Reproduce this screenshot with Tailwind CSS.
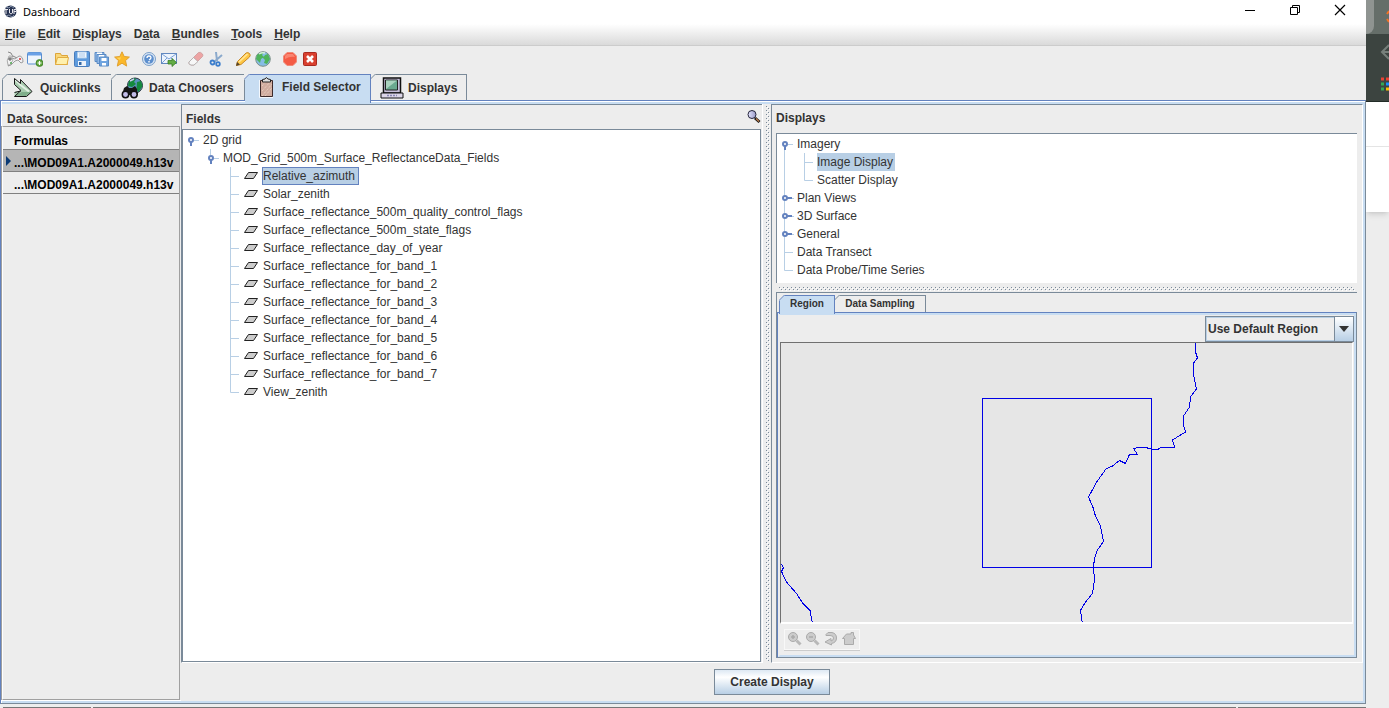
<!DOCTYPE html>
<html lang="en">
<head>
<meta charset="utf-8">
<title>Dashboard</title>
<script src="https://cdn.jsdelivr.net/npm/@tailwindcss/browser@4"></script>
</head>
<body class="h-screen overflow-hidden bg-[#ededed] font-['Liberation_Sans',Arial,sans-serif] text-xs leading-[18px] text-[#333]">

<svg class="absolute h-0 w-0" aria-hidden="true">
  <symbol id="open" viewBox="0 0 20 18"><path d="M11 9.500h5" stroke="#b8cfe5"/><circle cx="8" cy="9" r="2" fill="#fff" stroke="#6382bf" stroke-width="2"/><path d="M8 11v4" stroke="#6382bf" stroke-width="2"/></symbol>
  <symbol id="closed" viewBox="0 0 20 18"><path d="M13 9.500h4" stroke="#b8cfe5"/><circle cx="8" cy="9" r="2" fill="#fff" stroke="#6382bf" stroke-width="2"/><path d="M10 9h5" stroke="#6382bf" stroke-width="2"/></symbol>
  <symbol id="mid" viewBox="0 0 10 18"><path d="M.5 0v18M1 9.500h8" stroke="#b8cfe5"/></symbol>
  <symbol id="end" viewBox="0 0 10 18"><path d="M.5 0v9.500h8.500" fill="none" stroke="#b8cfe5"/></symbol>
  <symbol id="plane" viewBox="0 0 14 10"><path d="M4.500 1.500h9l-4 6h-9z" fill="#ccc" stroke="#222"/></symbol>
  <symbol id="corner" viewBox="0 0 6 6"><path d="M0 0h6L0 6z" fill="#ededed"/><path d="M0 5.500L5.500 0" stroke="currentColor"/></symbol>
  <pattern id="dots" width="4" height="4" patternUnits="userSpaceOnUse"><path d="M0 .5h1M2 2.500h1" stroke="#7a8a99"/><path d="M1 1.500h1M3 3.500h1" stroke="#fff"/></pattern>
  <linearGradient id="lens"><stop stop-color="#e6e6ff"/><stop offset="1" stop-color="#9a9ac8"/></linearGradient>
</svg>

<div class="flex h-full">
<div class="flex h-full min-w-0 flex-1 flex-col">

  <header class="flex h-6 shrink-0 items-center bg-white pl-1 font-['Noto_Sans',sans-serif] text-black">
    <svg class="mr-[5px] h-3.5 w-3.5" viewBox="0 0 14 14"><circle cx="6.500" cy="6.500" r="6" fill="#283452"/><path d="M2 2l3 1 2-2 3 2M2 11l3-1 3 2 2-2" fill="none" stroke="#7f8da6"/><path d="M0 4.500h4M2 4v5M5.500 4v4q1.500 2 3 0V4M10 9V4.500h2.500v2H10" fill="none" stroke="#e8e8ee"/></svg>
    <h1 class="grow text-[11px]">Dashboard</h1>
    <button aria-label="Minimize" class="flex h-5 w-[45px] items-start justify-center pt-0.5"><svg class="h-3 w-3" viewBox="0 0 12 12"><path d="M1 6.500h10" stroke="#000"/></svg></button>
    <button aria-label="Restore" class="flex h-5 w-[45px] items-start justify-center pt-0.5"><svg class="h-3 w-3" viewBox="0 0 12 12" fill="none" stroke="#000"><path d="M1.500 3.500h7v7h-7zM3.500 3V1.500h7v7H9"/></svg></button>
    <button aria-label="Close" class="mr-[3px] flex h-5 w-[46px] items-start justify-center pt-0.5"><svg class="h-3 w-3" viewBox="0 0 12 12"><path d="M1 1l10 10M11 1L1 11" stroke="#000" stroke-width="1.200"/></svg></button>
  </header>

  <nav class="flex h-[22px] shrink-0 items-center gap-3 border-b border-[#ccc] bg-linear-to-b from-white to-[#dadada] pb-0.5 pl-[5px] font-bold">
    <button><u>F</u>ile</button><button><u>E</u>dit</button><button><u>D</u>isplays</button><button>D<u>a</u>ta</button><button><u>B</u>undles</button><button><u>T</u>ools</button><button><u>H</u>elp</button>
  </nav>

  <div role="toolbar" aria-label="Main tools" class="flex h-7 shrink-0 items-center gap-[7px] pb-0.5 pl-[5px]">
    <div class="flex">
      <button aria-label="Show dashboard" class="flex w-5 justify-center"><svg class="h-4 w-[18px]" viewBox="0 0 18 16"><path d="M2 1l3 1 2 4M7 5l4 2" fill="none" stroke="#888"/><path d="M6 7l3 1 4-3q4 0 4 6l-2 1-3-3-3 1-4 4-3 1z" fill="#f0f0f4" stroke="#888" stroke-width=".8"/><path d="M3 5q-3 5-1 9l2 0 3-5-2-4z" fill="#f2f2f2" stroke="#999" stroke-width=".8"/><path d="M2 8h4M4 6v4" stroke="#5a5a5a"/><circle cx="14" cy="8" r="1" fill="#d33"/><circle cx="5" cy="12" r="1" fill="#5a5"/></svg></button>
      <button aria-label="New window" class="flex w-5 justify-center"><svg class="h-4 w-4" viewBox="0 0 16 16"><rect x=".5" y="1.500" width="14" height="11.500" rx="1" fill="#eef4fc" stroke="#5b8fd0"/><path d="M1 3h13" stroke="#6aa0e6" stroke-width="3"/><circle cx="12.500" cy="12" r="3.500" fill="#5fa63c" stroke="#35751d" stroke-width=".7"/><path d="M10.500 12h4M12.500 10v4" stroke="#fff" stroke-width="1.200"/></svg></button>
    </div>
    <div class="flex">
      <button aria-label="Open" class="flex w-5 justify-center"><svg class="h-4 w-4" viewBox="0 0 16 16"><path d="M1.500 13.500v-11h5l1 2h6v9z" fill="#f9d77a" stroke="#dda53a"/><path d="M1.500 13.500l2-7h11l-1.500 7z" fill="#fff0ad" stroke="#e2ad42"/></svg></button>
      <button aria-label="Save" class="flex w-5 justify-center"><svg class="h-4 w-4" viewBox="0 0 16 16"><rect x=".5" y=".5" width="15" height="15" rx="1" fill="#5f9bdd" stroke="#4a7dbb"/><path d="M3.500 1h9v6h-9z" fill="#f2f8ff" stroke="#afcdea"/><path d="M5 3h6M5 5h6" stroke="#a9c7e8"/><path d="M4 10h8v5H4z" fill="#eef3fa"/><path d="M5 11h2.500v3H5z" fill="#3468a5"/></svg></button>
      <button aria-label="Save as" class="flex w-5 justify-center"><svg class="h-4 w-4" viewBox="0 0 16 16" stroke="#5b8bc4"><path d="M1 1.500h9v9H1z" fill="#91b9e8"/><path d="M3 1.500h5v2H3z" fill="#fff" stroke="none"/><path d="M3 3.500h9v9H3z" fill="#91b9e8"/><path d="M5 4h5v2H5z" fill="#fff" stroke="none"/><path d="M5.500 6h9v9h-9z" fill="#6fa4df"/><path d="M7.500 7h5v3h-5zM8 12h4v2.500H8z" fill="#fff" stroke="none"/></svg></button>
      <button aria-label="Favorite" class="flex w-5 justify-center"><svg class="h-4 w-4" viewBox="0 0 16 16"><path d="M8 .8l2.200 4.700 5.200.6-3.900 3.500 1.200 5.500L8 12.200l-4.700 2.900 1.200-5.500L.6 6.100l5.200-.6z" fill="#fbb829" stroke="#e0a030"/><path d="M8 2.500L6.500 6.500l-4 .3L6 9z" fill="#ffd560"/></svg></button>
    </div>
    <div class="flex">
      <button aria-label="Help" class="flex w-5 justify-center"><svg class="h-4 w-4" viewBox="0 0 16 16"><circle cx="8" cy="8" r="6.500" fill="#dce8f5" stroke="#7b9fc9"/><circle cx="8" cy="8" r="4.800" fill="#5d8fce"/><path d="M6 7q0-2 2-2t2 1.500T8 9" fill="none" stroke="#fff" stroke-width="1.300"/><path d="M8 10v1.500" stroke="#fff" stroke-width="1.400"/></svg></button>
      <button aria-label="Send support request" class="flex w-5 justify-center"><svg class="h-4 w-4" viewBox="0 0 16 16"><rect x=".5" y="2.500" width="15" height="10" fill="#edf4fd" stroke="#6288bf"/><path d="M1 3l7 5 7-5M1 12l5-5M15 12l-5-5" fill="none" stroke="#7ca2d7"/><path d="M7 9.500h4V7.500l4.500 4-4.500 4v-2.500H7z" fill="#63ad45" stroke="#397c25" stroke-width=".8"/></svg></button>
    </div>
    <div class="flex">
      <button aria-label="Remove all displays" class="flex w-5 justify-center"><svg class="h-4 w-4" viewBox="0 0 16 16"><path d="M1 11L10.500 1.500q2-1 4 1.500.8 1.500 0 2.500L6 14H3q-3-1-2-3z" fill="#eda4a4" stroke="#c99a9a" stroke-width=".8"/><path d="M1 11l4.500-4.500 4.500 4L6 14H3q-3-1-2-3z" fill="#f7f7f7" stroke="#aaa" stroke-width=".8"/></svg></button>
      <button aria-label="Cut data" class="flex w-5 justify-center"><svg class="h-4 w-4" viewBox="0 0 16 16" fill="none"><path d="M8 1l1 9M14 4l-8 7" stroke="#8aa9cc" stroke-width="2"/><circle cx="4.500" cy="11.500" r="2" stroke="#3b7dcc" stroke-width="1.800"/><circle cx="10" cy="13" r="1.800" stroke="#3b7dcc" stroke-width="1.800"/></svg></button>
    </div>
    <div class="flex">
      <button aria-label="Edit" class="flex w-5 justify-center"><svg class="h-4 w-4" viewBox="0 0 16 16"><path d="M1.500 14.500l1-4L11 2q2-1 3.500.5T14.500 6L6 13.500z" fill="#ffc744" stroke="#c8892a"/><path d="M4 11l8.500-8" stroke="#ffe69a" stroke-width="1.500"/><path d="M1 15l1-4 3 2.500z" fill="#58452a"/></svg></button>
      <button aria-label="Globe" class="flex w-5 justify-center"><svg class="h-4 w-4" viewBox="0 0 16 16"><circle cx="8" cy="8" r="7.300" fill="#86bde6" stroke="#7d9088"/><path d="M2 4q3-3 7-3l-2 3 2 2-3 2-1 4-4-4zM10 4l3-1 2 5-3 5-3-1 1-3-2-2z" fill="#4fb45a"/><path d="M4 3q3-2 6-1" stroke="#d7f0dd" stroke-width="1.500" fill="none"/></svg></button>
    </div>
    <div class="flex">
      <button aria-label="Stop" class="flex w-5 justify-center"><svg class="h-4 w-4" viewBox="0 0 16 16"><path d="M5 1.500h6L14.500 5v6L11 14.500H5L1.500 11V5z" fill="#f45b45" stroke="#f08a78"/><path d="M5 3h6l2 3q-5-1-10 2V5z" fill="#fa8571"/></svg></button>
      <button aria-label="Exit" class="flex w-5 justify-center"><svg class="h-4 w-4" viewBox="0 0 16 16"><rect x="1.500" y="1.500" width="13" height="13" rx="1" fill="#d9402f" stroke="#a92a20"/><path d="M5 5l6 6M11 5l-6 6" stroke="#fff" stroke-width="2.600"/></svg></button>
    </div>
  </div>

  <div role="tablist" class="flex h-[26px] shrink-0 pl-0.5 font-bold">
    <button role="tab" class="relative flex w-[110px] items-center gap-1.5 border-x border-t border-[#7a8a99] pl-[9px]">
      <svg class="absolute -top-px -left-px h-1.5 w-1.5 text-[#7a8a99]"><use href="#corner"/></svg>
      <svg class="h-[22px] w-[22px]" viewBox="0 0 22 22"><path d="M2.500 2v5.500l6.500 6-6.500 1.500v4.500h12l5.500-5L8.500 3v4z" fill="#a9cdb0"/><path d="M2.500 2l6 6 8.500 6.500" fill="none" stroke="#e2f0e3" stroke-width="2"/><path d="M3 18.500l7-3.500h9l-5 4z" fill="#7fae8a"/><path d="M2.500 1.500v6l6.500 6-6.500 6h12l5.500-5L8.500 2.500v4zM2.500 15.500l6-1.500" fill="none" stroke="#151515"/></svg>Quicklinks</button>
    <button role="tab" class="relative flex w-[133px] items-center gap-1 border-t border-r border-[#7a8a99] pl-[9px]">
      <svg class="absolute -top-px -left-px h-1.5 w-1.5 text-[#7a8a99]"><use href="#corner"/></svg>
      <svg class="h-[22px] w-6" viewBox="0 0 24 22"><circle cx="14" cy="8.500" r="7.500" fill="#5a93bd" stroke="#28343e"/><path d="M8 4q4-4 7-2l-2 3 2 2-4 3-4-1zM16 5l4-1 1.500 5-4 6-2-3z" fill="#148a3e"/><path d="M9 4l4-2" stroke="#cce" stroke-width="1.500"/><path d="M3 11l3-2 2 2h3l3-2 2 3 1 6H1z" fill="#171717"/><circle cx="4.500" cy="17.500" r="3.200" fill="#c2bde8" stroke="#111" stroke-width="1.500"/><circle cx="13" cy="17.500" r="3.200" fill="#c2bde8" stroke="#111" stroke-width="1.500"/></svg>Data Choosers</button>
    <button role="tab" aria-selected="true" class="relative z-10 -mb-[3px] flex w-[126px] items-center gap-1.5 border-t border-r border-[#6382bf] bg-[#c8ddf2] pb-1 pl-[11px]">
      <svg class="absolute -top-px -left-px h-1.5 w-1.5 text-[#6382bf]"><use href="#corner"/></svg>
      <svg class="h-[22px] w-5" viewBox="0 0 20 22"><path d="M4.500 4.500h12v16h-12z" fill="#d1ada0" stroke="#3d2a2a"/><path d="M3.500 4v17.500h13.500" fill="none" stroke="#fff" stroke-width=".8"/><path d="M6 20L16 8M6 15l9-10M9 20l7-8M6 10l5-6" stroke="#eed8c8" stroke-dasharray="1 1"/><path d="M6.500 6V3.500L9 3q1-3 3 0l2.500.5V6z" fill="#e0e0e0" stroke="#222"/></svg>Field Selector</button>
    <button role="tab" class="relative flex w-24 items-center gap-1 border-t border-r border-[#7a8a99] pl-[9px]">
      <svg class="absolute -top-px -left-px h-1.5 w-1.5 text-[#7a8a99]"><use href="#corner"/></svg>
      <svg class="h-[22px] w-6" viewBox="0 0 24 22"><path d="M3.500 1h17v15h-17z" fill="#c6bfda" stroke="#111" stroke-width="1.500"/><path d="M5.500 3h12v10h-12z" fill="#6aa98f" stroke="#222"/><path d="M6 3.500h11L6 12z" fill="#a9d3be"/><path d="M1 16h22v5H1z" fill="#dcd6e8" stroke="#111"/><path d="M7 18.500h10" stroke="#8a88b4" stroke-width="1.500" stroke-dasharray="2 1"/></svg>Displays</button>
  </div>

  <main class="flex min-h-0 grow flex-col border-t border-r border-b border-l border-[#6382bf] border-r-[#7a8a99] border-b-[#7a8a99]">
  <div class="flex min-h-0 grow flex-col border-t border-l border-white">
  <div class="flex min-h-0 grow border-t-2 border-r-2 border-b-2 border-[#c8ddf2] bg-[#ededed]">

    <section class="flex w-[179px] shrink-0 flex-col border-b border-white">
      <h2 class="h-[22px] shrink-0 pt-1.5 pl-[5px] font-bold">Data Sources:</h2>
      <ul class="mr-px grow overflow-hidden border border-t-[#a0a0a0] border-r-[#a0a0a0] border-b-[#a0a0a0] border-l-white leading-4 font-bold text-black shadow-[-1px_0_#a0a0a0]">
        <li class="flex h-[23px] items-end border-b border-[#808080] pl-[11px]">Formulas</li>
        <li class="relative flex h-[22px] items-end border-b border-[#808080] bg-[#b5b5b5] pl-[11px]"><svg class="absolute top-[5px] left-[3px] h-3 w-1.5" viewBox="0 0 6 12"><path d="M0 1l5 5-5 5z" fill="#0b3a75"/></svg>...\MOD09A1.A2000049.h13v</li>
        <li class="flex h-[22px] items-end border-b border-[#808080] pl-[11px]">...\MOD09A1.A2000049.h13v</li>
      </ul>
    </section>

    <div class="flex min-w-0 grow flex-col">
      <div class="flex min-h-0 grow">
        <section class="flex w-[581px] shrink-0 flex-col border-t border-l border-[#7a8a99] border-b border-b-white">
          <div class="flex h-6 shrink-0 items-center justify-between pl-1">
            <h2 class="pt-1 font-bold">Fields</h2>
            <button aria-label="Search fields"><svg class="h-4 w-4" viewBox="0 0 16 16"><circle cx="6" cy="5.500" r="4" fill="url(#lens)" stroke="#25253c"/><path d="M9 9l4.500 4" stroke="#111" stroke-width="3"/><path d="M10 9.500l3 3" stroke="#b87a4c" stroke-width="1.500"/></svg></button>
          </div>
          <div class="mr-px grow border border-[#7a8a99] bg-white pt-px">
            <ul>
              <li>
                <div class="flex"><svg class="h-[18px] w-5"><use href="#open"/></svg>2D grid</div>
                <ul class="pl-5">
                  <li>
                    <div class="flex"><svg class="h-[18px] w-5"><path d="M7.500 0v6" stroke="#b8cfe5"/><use href="#open"/></svg>MOD_Grid_500m_Surface_ReflectanceData_Fields</div>
                    <ul class="pl-[27px]">
                      <li class="flex"><svg class="h-[18px] w-2.5"><use href="#mid"/></svg><svg class="mt-1 mr-1 ml-1 h-2.5 w-3.5"><use href="#plane"/></svg><span class="border border-[#6382bf] bg-[#b8cfe5] pr-[3px] leading-4">Relative_azimuth</span></li>
                      <li class="flex"><svg class="h-[18px] w-2.5"><use href="#mid"/></svg><svg class="mt-1 mr-[5px] ml-1 h-2.5 w-3.5"><use href="#plane"/></svg>Solar_zenith</li>
                      <li class="flex"><svg class="h-[18px] w-2.5"><use href="#mid"/></svg><svg class="mt-1 mr-[5px] ml-1 h-2.5 w-3.5"><use href="#plane"/></svg>Surface_reflectance_500m_quality_control_flags</li>
                      <li class="flex"><svg class="h-[18px] w-2.5"><use href="#mid"/></svg><svg class="mt-1 mr-[5px] ml-1 h-2.5 w-3.5"><use href="#plane"/></svg>Surface_reflectance_500m_state_flags</li>
                      <li class="flex"><svg class="h-[18px] w-2.5"><use href="#mid"/></svg><svg class="mt-1 mr-[5px] ml-1 h-2.5 w-3.5"><use href="#plane"/></svg>Surface_reflectance_day_of_year</li>
                      <li class="flex"><svg class="h-[18px] w-2.5"><use href="#mid"/></svg><svg class="mt-1 mr-[5px] ml-1 h-2.5 w-3.5"><use href="#plane"/></svg>Surface_reflectance_for_band_1</li>
                      <li class="flex"><svg class="h-[18px] w-2.5"><use href="#mid"/></svg><svg class="mt-1 mr-[5px] ml-1 h-2.5 w-3.5"><use href="#plane"/></svg>Surface_reflectance_for_band_2</li>
                      <li class="flex"><svg class="h-[18px] w-2.5"><use href="#mid"/></svg><svg class="mt-1 mr-[5px] ml-1 h-2.5 w-3.5"><use href="#plane"/></svg>Surface_reflectance_for_band_3</li>
                      <li class="flex"><svg class="h-[18px] w-2.5"><use href="#mid"/></svg><svg class="mt-1 mr-[5px] ml-1 h-2.5 w-3.5"><use href="#plane"/></svg>Surface_reflectance_for_band_4</li>
                      <li class="flex"><svg class="h-[18px] w-2.5"><use href="#mid"/></svg><svg class="mt-1 mr-[5px] ml-1 h-2.5 w-3.5"><use href="#plane"/></svg>Surface_reflectance_for_band_5</li>
                      <li class="flex"><svg class="h-[18px] w-2.5"><use href="#mid"/></svg><svg class="mt-1 mr-[5px] ml-1 h-2.5 w-3.5"><use href="#plane"/></svg>Surface_reflectance_for_band_6</li>
                      <li class="flex"><svg class="h-[18px] w-2.5"><use href="#mid"/></svg><svg class="mt-1 mr-[5px] ml-1 h-2.5 w-3.5"><use href="#plane"/></svg>Surface_reflectance_for_band_7</li>
                      <li class="flex"><svg class="h-[18px] w-2.5"><use href="#end"/></svg><svg class="mt-1 mr-[5px] ml-1 h-2.5 w-3.5"><use href="#plane"/></svg>View_zenith</li>
                    </ul>
                  </li>
                </ul>
              </li>
            </ul>
          </div>
        </section>

        <div class="w-[9px] shrink-0 border-l border-white py-0.5 pl-[3px]"><svg class="h-full w-1"><rect width="4" height="100%" fill="url(#dots)"/></svg></div>

        <section class="flex min-w-0 grow flex-col border-t border-r border-b border-l border-[#7a8a99] border-r-white border-b-white pr-[5px] pb-1 pl-1">
          <h2 class="h-7 shrink-0 pt-1 font-bold">Displays</h2>
          <ul class="h-[150px] shrink-0 border-t border-l border-[#7a8a99] bg-white pt-px">
            <li>
              <div class="flex"><svg class="h-[18px] w-5"><path d="M7.500 12v6" stroke="#b8cfe5"/><use href="#open"/></svg>Imagery</div>
              <ul>
                <li class="flex"><svg class="mr-5 h-[18px] w-2"><path d="M7.500 0v18" stroke="#b8cfe5"/></svg><svg class="mr-[3px] -ml-px h-[18px] w-2.5"><use href="#mid"/></svg><span class="bg-[#b8cfe5] pr-0.5">Image Display</span></li>
                <li class="flex"><svg class="mr-5 h-[18px] w-2"><path d="M7.500 0v18" stroke="#b8cfe5"/></svg><svg class="mr-[3px] -ml-px h-[18px] w-2.5"><use href="#end"/></svg>Scatter Display</li>
              </ul>
            </li>
            <li class="flex"><svg class="h-[18px] w-5"><path d="M7.500 0v18" stroke="#b8cfe5"/><use href="#closed"/></svg>Plan Views</li>
            <li class="flex"><svg class="h-[18px] w-5"><path d="M7.500 0v18" stroke="#b8cfe5"/><use href="#closed"/></svg>3D Surface</li>
            <li class="flex"><svg class="h-[18px] w-5"><path d="M7.500 0v18" stroke="#b8cfe5"/><use href="#closed"/></svg>General</li>
            <li class="flex"><svg class="h-[18px] w-5"><path d="M7.500 0v18M8 9.500h8" stroke="#b8cfe5"/></svg>Data Transect</li>
            <li class="flex"><svg class="h-[18px] w-5"><path d="M7.500 0v9.500h8.500" fill="none" stroke="#b8cfe5"/></svg>Data Probe/Time Series</li>
          </ul>
          <div class="h-[9px] shrink-0 py-1 pr-0.5 pl-[3px]"><svg class="h-1 w-full"><rect width="100%" height="4" fill="url(#dots)"/></svg></div>

          <div class="flex min-h-0 grow flex-col border-t border-l border-[#7a8a99] pt-0.5">
            <div role="tablist" class="flex h-[17px] shrink-0 pl-0.5 text-[10px] leading-4 font-bold">
              <button role="tab" aria-selected="true" class="relative z-10 -mb-0.5 w-14 border-x border-t border-[#6382bf] bg-[#c8ddf2] pb-0.5"><svg class="absolute -top-px -left-px h-1.5 w-1.5 text-[#6382bf]"><use href="#corner"/></svg>Region</button>
              <button role="tab" class="relative w-[91px] border-t border-r border-[#7a8a99]"><svg class="absolute -top-px -left-px h-1.5 w-1.5 text-[#7a8a99]"><use href="#corner"/></svg>Data Sampling</button>
            </div>
            <div class="flex min-h-0 grow flex-col border border-[#6382bf] border-r-[#7a8a99] border-b-[#7a8a99]">
              <div class="flex min-h-0 grow flex-col border-2 border-[#c8ddf2] border-l-[#ededed]">
                <div class="flex h-[27px] shrink-0 items-end justify-end">
                  <div class="relative w-[149px]">
                    <select aria-label="Region" class="block h-[26px] w-full appearance-none border border-[#7a8a99] bg-[#ededed] pl-0.5 font-bold shadow-[inset_0_0_0_1px_#b8cfe5]"><option>Use Default Region</option></select>
                    <span class="pointer-events-none absolute top-0 right-0 flex h-full w-5 items-center justify-center border border-[#7a8a99] bg-linear-to-b from-white to-[#b8cfe5]"><svg class="h-1.5 w-2.5" viewBox="0 0 10 6"><path d="M0 0h10L5 6z" fill="#333"/></svg></span>
                  </div>
                </div>
                <div class="mr-px min-h-0 grow border-t border-r border-b-2 border-l border-t-[#707070] border-r-white border-b-white border-l-[#707070] bg-[#e6e6e6]">
                  <svg class="block h-full w-full" shape-rendering="crispEdges" fill="none" stroke="#0000e6"><g transform="translate(-781 -343)"><path d="M982.500 398.500h169v169h-169z"/><path d="M1195.500 343v9l2 6-4 5v11l2 10 1 5-6 8-1 10-6 9v9l2 7-13 8 2 7h-13l-3 2h-7l-6-1.500h-7l-5 1 4 6h-8l-4 9-6-3-7 5.500-6.500 3-9 12.500-8.500 15.500 4.500 10.500 2 7 5.500 11.500 3 15.500-6 8.500-3 8-1 9.500 1 12.500-2 13.500-7 8.500-5 8.500 2 14M781.500 564l2 3.500-2 4 5 10.500 10 11.500 6 9.500 7.500 7.500 2.500 13"/></g></svg>
                </div>
                <div class="flex h-[31px] shrink-0 items-center pl-1">
                  <div role="toolbar" aria-label="Map tools" class="flex h-[22px] items-center border-b border-[#ccc] pr-0.5 pl-0.5 shadow-[inset_0_0_0_1px_#f8f8f8]">
                    <button aria-label="Zoom in" class="flex w-[18px] justify-center"><svg class="h-4 w-4" viewBox="0 0 16 16" fill="#ccc" stroke="#aaa"><circle cx="6" cy="6" r="4.500"/><path d="M4 6h4M6 4v4" stroke-width="1.500"/><path d="M9.500 9.500l4 4" stroke="#b8b8b8" stroke-width="3"/></svg></button>
                    <button aria-label="Zoom out" class="flex w-[18px] justify-center"><svg class="h-4 w-4" viewBox="0 0 16 16" fill="#ccc" stroke="#aaa"><circle cx="6" cy="6" r="4.500"/><path d="M4 6h4" stroke-width="1.500"/><path d="M9.500 9.500l4 4" stroke="#b8b8b8" stroke-width="3"/></svg></button>
                    <button aria-label="Previous view" class="flex w-[18px] justify-center"><svg class="h-4 w-4" viewBox="0 0 16 16" fill="#ccc" stroke="#aaa"><path d="M3 3.500l2-2h4q4.500 1 4.500 5.500t-5 5.500v1.500L2 11l6-3.500V10q2.500-.5 2.500-3T7 4.500H3z"/></svg></button>
                    <button aria-label="Home view" class="flex w-[18px] justify-center"><svg class="h-4 w-4" viewBox="0 0 16 16" fill="#ccc" stroke="#aaa"><path d="M1.500 7.500l4-4.500h4.500V1.500h2.500V4l2 3.500h-2v6h-9v-6z"/></svg></button>
                  </div>
                </div>
              </div>
            </div>
          </div>
        </section>
      </div>
      <div class="flex h-[38px] shrink-0 items-center justify-center">
        <button class="h-[26px] w-[116px] border border-[#7a8a99] bg-linear-to-b from-[#dde8f3] via-white via-30% to-[#b8cfe5] font-bold">Create Display</button>
      </div>
    </div>
  </div>
  </div>
  </main>
  <footer class="flex h-1 shrink-0 items-end gap-0.5 pl-[3px]"><span class="h-px w-[88px] bg-[#777]"></span><span class="h-px grow bg-[#777]"></span><span class="h-px w-32 bg-[#777]"></span></footer>
</div>

<aside class="flex w-[23px] shrink-0 flex-col overflow-hidden">
  <div class="flex h-[34px] bg-[#656e69]"><span class="w-2 rounded-br-lg bg-[#8f9491]"></span><svg class="h-full w-[15px]"><path d="M15 11l-2 3M13 19l2 3" stroke="#f37324" stroke-width="2"/></svg></div>
  <div class="h-[68px] border-b border-[#222b27] bg-[#3c4440]"><svg class="h-full w-full"><path d="M23 11l-7 7 7 7M16 18h7" fill="none" stroke="#77807b" stroke-width="2"/><path d="M15 45h3" stroke="#ea4335" stroke-width="3"/><path d="M20 45h3" stroke="#ea4335" stroke-width="3"/><path d="M15 50h3M15 55h3" stroke="#34a853" stroke-width="3"/><path d="M20 50h3" stroke="#1a8cff" stroke-width="3"/><path d="M20 55h3" stroke="#fbbc05" stroke-width="3"/></svg></div>
  <div class="h-[45px] border-b border-[#e5e5e5] bg-white"></div>
  <div class="h-[65px] bg-white shadow-md"></div>
</aside>
</div>
</body>
</html>
